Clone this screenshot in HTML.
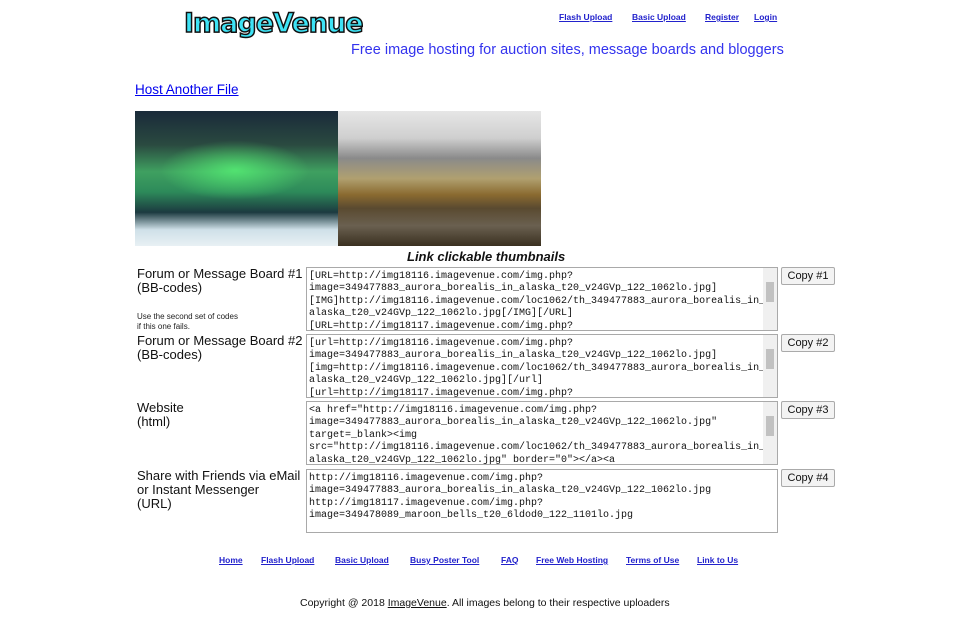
<!DOCTYPE html>
<html><head><meta charset="utf-8"><style>
body{margin:0;width:960px;height:640px;background:#fff;font-family:"Liberation Sans",Arial,sans-serif;position:relative;overflow:hidden}
.a{position:absolute}
a{color:#00e;text-decoration:underline}
.nav a{font-size:8.5px;font-weight:bold;color:#22c}
.lbl{font-size:13px;color:#111;line-height:14px}
.ta{position:absolute;left:306px;width:472px;border:1px solid #a9a9a9;font-family:"Liberation Mono","DejaVu Sans Mono",monospace;font-size:10px;line-height:12.4px;color:#111;padding:3px 2px 0;box-sizing:border-box;overflow:hidden;white-space:pre}
.sb{position:absolute;right:0;top:0;width:14px;bottom:0;background:#f0f0f0}
.sb i{position:absolute;left:3px;width:8px;background:#c1c1c1;top:14px;height:20px}
.btn{position:absolute;left:781px;width:52px;height:16px;border:1px solid #aaa;border-radius:2px;background:#f3f3f3;font-size:11px;text-align:center;line-height:16px;color:#111}
</style></head><body>
<div class="a" style="left:184px;top:8px;font-family:'DejaVu Sans',sans-serif;font-weight:bold;font-size:27px;color:#3ee3f5;-webkit-text-stroke:1.5px #111;letter-spacing:-1px">ImageVenue</div>
<div class="a nav" style="left:559px;top:7px"><a>Flash Upload</a></div>
<div class="a nav" style="left:632px;top:7px"><a>Basic Upload</a></div>
<div class="a nav" style="left:705px;top:7px"><a>Register</a></div>
<div class="a nav" style="left:754px;top:7px"><a>Login</a></div>
<div class="a" style="left:351px;top:42px;font-size:14.5px;color:#33e">Free image hosting for auction sites, message boards and bloggers</div>
<div class="a" style="left:135px;top:82px;font-size:13.5px"><a>Host Another File</a></div>
<div class="a" style="left:135px;top:111px;width:203px;height:135px;background:linear-gradient(180deg,#1a2a3a 0%,#2a4a40 25%,#3fa060 45%,#2d8a5a 60%,#1c3a40 75%,#cfe0e8 88%,#e8f0f4 100%)"></div>
<div class="a" style="left:160px;top:140px;width:150px;height:60px;background:radial-gradient(ellipse at 50% 50%,rgba(90,255,120,.7),rgba(90,255,120,0) 70%)"></div>
<div class="a" style="left:338px;top:111px;width:203px;height:135px;background:linear-gradient(180deg,#e6e6e6 0%,#cfcfcf 20%,#8a8a8a 35%,#b0a070 50%,#8a6a30 62%,#5a4a30 72%,#6a6050 85%,#3a3020 100%)"></div>
<div class="a" style="left:407px;top:249px;font-size:13px;font-weight:bold;font-style:italic;color:#111">Link clickable thumbnails</div>

<div class="a lbl" style="left:137px;top:267px">Forum or Message Board #1<br>(BB-codes)</div>
<div class="a" style="left:137px;top:312px;font-size:8px;color:#222;line-height:10px">Use the second set of codes<br>if this one fails.</div>
<div class="ta" style="top:267px;height:64px">[URL=http://img18116.imagevenue.com/img.php?
image=349477883_aurora_borealis_in_alaska_t20_v24GVp_122_1062lo.jpg]
[IMG]http://img18116.imagevenue.com/loc1062/th_349477883_aurora_borealis_in_
alaska_t20_v24GVp_122_1062lo.jpg[/IMG][/URL]
[URL=http://img18117.imagevenue.com/img.php?<div class="sb"><i></i></div></div>
<div class="btn" style="top:267px">Copy #1</div>

<div class="a lbl" style="left:137px;top:334px">Forum or Message Board #2<br>(BB-codes)</div>
<div class="ta" style="top:334px;height:64px">[url=http://img18116.imagevenue.com/img.php?
image=349477883_aurora_borealis_in_alaska_t20_v24GVp_122_1062lo.jpg]
[img=http://img18116.imagevenue.com/loc1062/th_349477883_aurora_borealis_in_
alaska_t20_v24GVp_122_1062lo.jpg][/url]
[url=http://img18117.imagevenue.com/img.php?<div class="sb"><i></i></div></div>
<div class="btn" style="top:334px">Copy #2</div>

<div class="a lbl" style="left:137px;top:401px">Website<br>(html)</div>
<div class="ta" style="top:401px;height:64px">&lt;a href="http://img18116.imagevenue.com/img.php?
image=349477883_aurora_borealis_in_alaska_t20_v24GVp_122_1062lo.jpg"
target=_blank&gt;&lt;img
src="http://img18116.imagevenue.com/loc1062/th_349477883_aurora_borealis_in_
alaska_t20_v24GVp_122_1062lo.jpg" border="0"&gt;&lt;/a&gt;&lt;a<div class="sb"><i></i></div></div>
<div class="btn" style="top:401px">Copy #3</div>

<div class="a lbl" style="left:137px;top:469px">Share with Friends via eMail<br>or Instant Messenger<br>(URL)</div>
<div class="ta" style="top:469px;height:64px">http://img18116.imagevenue.com/img.php?
image=349477883_aurora_borealis_in_alaska_t20_v24GVp_122_1062lo.jpg
http://img18117.imagevenue.com/img.php?
image=349478089_maroon_bells_t20_6ldod0_122_1101lo.jpg</div>
<div class="btn" style="top:469px">Copy #4</div>

<div class="a nav" style="left:219px;top:550px"><a>Home</a></div>
<div class="a nav" style="left:261px;top:550px"><a>Flash Upload</a></div>
<div class="a nav" style="left:335px;top:550px"><a>Basic Upload</a></div>
<div class="a nav" style="left:410px;top:550px"><a>Busy Poster Tool</a></div>
<div class="a nav" style="left:501px;top:550px"><a>FAQ</a></div>
<div class="a nav" style="left:536px;top:550px"><a>Free Web Hosting</a></div>
<div class="a nav" style="left:626px;top:550px"><a>Terms of Use</a></div>
<div class="a nav" style="left:697px;top:550px"><a>Link to Us</a></div>
<div class="a" style="left:300px;top:597px;font-size:10.5px;color:#111">Copyright @ 2018 <a style="color:#111">ImageVenue</a>. All images belong to their respective uploaders</div>
</body></html>
